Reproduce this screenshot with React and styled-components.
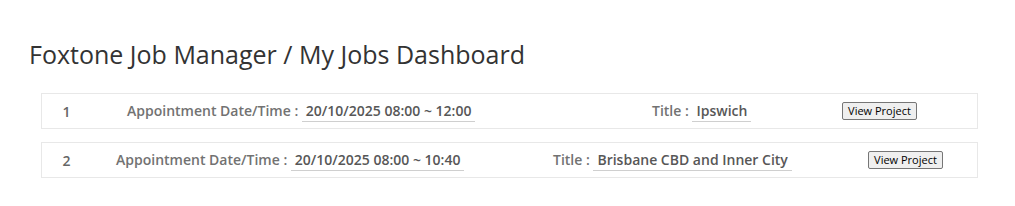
import React from "react";
import styled, { createGlobalStyle } from "styled-components";

const GlobalStyle = createGlobalStyle`
	body {
		margin: 0;
		background: #ffffff;
		font-family: "Open Sans", "Liberation Sans", sans-serif;
	}
`;

const jobs = [
	{ id: 1, when: "20/10/2025 08:00 ~ 12:00", title: "Ipswich", cols: "85px 525px 190px 1fr" },
	{ id: 2, when: "20/10/2025 08:00 ~ 10:40", title: "Brisbane CBD and Inner City", cols: "74px 437px 315px 1fr" },
];

function App() {
	return (
		<Page>
			<GlobalStyle />
			<Heading>Foxtone Job Manager / My Jobs Dashboard</Heading>
			<JobList>
				{jobs.map((job) => (
					<JobRow key={job.id} $cols={job.cols}>
						<Num>{job.id}</Num>
						<Field>
							<Label>Appointment Date/Time : </Label>
							<Value>{job.when}</Value>
						</Field>
						<Field>
							<Label>Title : </Label>
							<Value>{job.title}</Value>
						</Field>
						<Field>
							<ViewButton>View Project</ViewButton>
						</Field>
					</JobRow>
				))}
			</JobList>
		</Page>
	);
}

export default App;

const Page = styled.div`
	padding: 38px 0 0 0;
`;

const Heading = styled.h1`
	margin: 0 0 22px 29px;
	font-size: 25px;
	font-weight: 400;
	line-height: 33px;
	color: #333333;
`;

const JobList = styled.div`
	display: flex;
	flex-direction: column;
	gap: 13px;
	margin-left: 41px;
	width: 937px;
`;

const JobRow = styled.div`
	display: grid;
	grid-template-columns: ${(p) => p.$cols};
	align-items: center;
	height: 34px;
	border: 1px solid #e8e8e8;
`;

const Num = styled.div`
	width: 49px;
	text-align: center;
	font-size: 14px;
	font-weight: 600;
	color: #666666;
`;

const Field = styled.div`
	display: flex;
	align-items: baseline;
	white-space: nowrap;
`;

const Label = styled.span`
	font-size: 14px;
	font-weight: 600;
	color: #727272;
	white-space: pre;
`;

const Value = styled.span`
	padding: 0 4px 1px 4px;
	border-bottom: 1px solid #cfcfcf;
	font-size: 14px;
	font-weight: 600;
	color: #575757;
`;

const ViewButton = styled.button`
	width: 75px;
	height: 18px;
	padding: 0;
	border: 1px solid #767676;
	border-radius: 2px;
	background: #efefef;
	font-family: "Open Sans", "Liberation Sans", sans-serif;
	font-size: 11px;
	color: #000000;
	line-height: 16px;
`;
